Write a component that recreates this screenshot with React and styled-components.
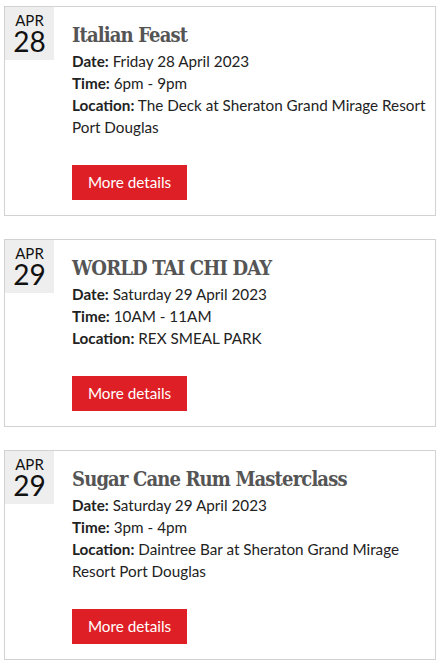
import React from "react";
import styled, { createGlobalStyle } from "styled-components";

const Global = createGlobalStyle`
  html, body { margin: 0; padding: 0; background: #fff; }
  body { font-family: Lato, "Open Sans", sans-serif; color: #222; }
`;

const List = styled.div`
  display: flex;
  flex-direction: column;
  gap: 23px;
  padding: 6px 0 0 4px;
`;

const Card = styled.article`
  box-sizing: border-box;
  width: 432px;
  display: flex;
  align-items: flex-start;
  border: 1px solid #d2d2d2;
  background: #fff;
`;

const DateBox = styled.div`
  box-sizing: border-box;
  flex: none;
  width: 49px;
  height: 53px;
  padding-top: 5.5px;
  background: #eeeeee;
  text-align: center;
  color: #111;
  font-family: Lato, sans-serif;
`;

const Month = styled.div`
  font-size: 15px;
  line-height: 15px;
`;

const Day = styled.div`
  font-size: 28px;
  line-height: 27px;
`;

const Content = styled.div`
  flex: 1;
  margin-left: 18px;
  padding: 16px 6px 15px 0;
`;

const Title = styled.h2`
  margin: 0 0 3px;
  font-family: "DejaVu Serif Condensed", "DejaVu Serif", serif;
  font-weight: bold;
  font-size: 20px;
  letter-spacing: -0.85px;
  line-height: 24px;
  color: #555;
`;

const Line = styled.p`
  margin: 0;
  font-size: 15.25px;
  line-height: 22px;
  color: #222;
  b { font-weight: bold; }
`;

const Button = styled.a`
  display: inline-block;
  margin-top: 27px;
  width: 115px;
  height: 35px;
  line-height: 35px;
  text-align: center;
  background: #df1f26;
  color: #fff;
  font-size: 15.25px;
  text-decoration: none;
`;

const events = [
  {
    month: "APR",
    day: "28",
    title: "Italian Feast",
    date: "Friday 28 April 2023",
    time: "6pm - 9pm",
    location: "The Deck at Sheraton Grand Mirage Resort Port Douglas",
  },
  {
    month: "APR",
    day: "29",
    title: "WORLD TAI CHI DAY",
    date: "Saturday 29 April 2023",
    time: "10AM - 11AM",
    location: "REX SMEAL PARK",
  },
  {
    month: "APR",
    day: "29",
    title: "Sugar Cane Rum Masterclass",
    date: "Saturday 29 April 2023",
    time: "3pm - 4pm",
    location: "Daintree Bar at Sheraton Grand Mirage Resort Port Douglas",
  },
];

export default function App() {
  return (
    <>
      <Global />
      <List>
        {events.map((e, i) => (
          <Card key={i}>
            <DateBox>
              <Month>{e.month}</Month>
              <Day>{e.day}</Day>
            </DateBox>
            <Content>
              <Title>{e.title}</Title>
              <Line><b>Date:</b> {e.date}</Line>
              <Line><b>Time:</b> {e.time}</Line>
              <Line><b>Location:</b> {e.location}</Line>
              <Button href="#">More details</Button>
            </Content>
          </Card>
        ))}
      </List>
    </>
  );
}
